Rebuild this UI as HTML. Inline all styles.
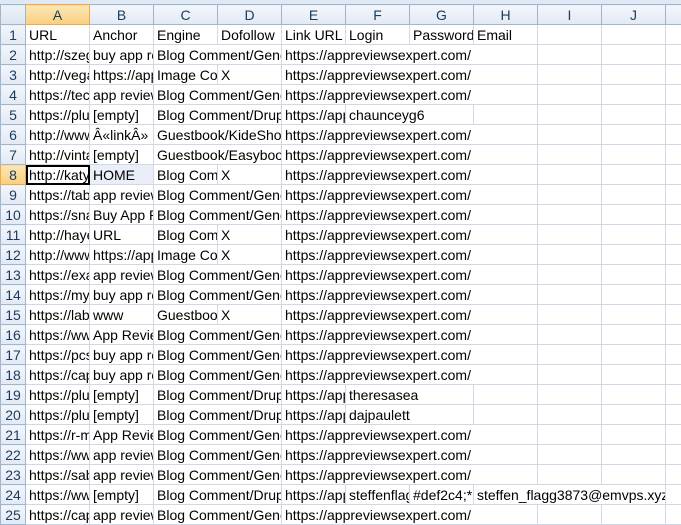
<!DOCTYPE html>
<html><head><meta charset="utf-8"><style>
html,body{margin:0;padding:0;background:#fff;width:681px;height:525px;overflow:hidden}
.top{position:absolute;left:0;top:0;width:681px;height:4px;background:#dfe8f5;border-bottom:1px solid #b8c9e0}
table{position:absolute;left:0;top:4px;border-collapse:collapse;table-layout:fixed;width:681px;font-family:"Liberation Sans",sans-serif;font-size:14px;color:#000}
td,th{border:1px solid #d0d7e5;overflow:hidden;white-space:nowrap;padding:1px 1px 0 3px;height:18px;line-height:18px;text-align:left;font-weight:normal}
th{background:linear-gradient(#f3f6fb,#e2e9f4);border-color:#9eb6ce;color:#1c3a5e;text-align:center;padding:1px 0 0 0;font-size:14px}
th.s{background:linear-gradient(#fbe7b5,#f8cf7f);border-color:#f2a74a}
td.sel{outline:2px solid #000;outline-offset:-2px}
td.hb{background:#e9eef8}
</style></head><body>
<div class="top"></div>
<table>
<colgroup><col style="width:25px"><col style="width:64px"><col style="width:64px"><col style="width:64px"><col style="width:64px"><col style="width:64px"><col style="width:64px"><col style="width:64px"><col style="width:64px"><col style="width:64px"><col style="width:64px"><col style="width:16px"></colgroup>
<thead><tr><th style="background:linear-gradient(#eef2f8,#dbe4f0)"></th><th class="s">A</th><th>B</th><th>C</th><th>D</th><th>E</th><th>F</th><th>G</th><th>H</th><th>I</th><th>J</th><th></th></tr></thead>
<tbody>
<tr><th>1</th><td>URL</td><td>Anchor</td><td>Engine</td><td>Dofollow</td><td>Link URL</td><td>Login</td><td>Password</td><td>Email</td><td></td><td></td><td></td></tr>
<tr><th>2</th><td>http://szeged</td><td>buy app reviews</td><td colspan="2">Blog Comment/Generic</td><td colspan="4">https://appreviewsexpert.com/</td><td></td><td></td><td></td></tr>
<tr><th>3</th><td>http://vegas</td><td>https://appreviews</td><td>Image Comment</td><td>X</td><td colspan="4">https://appreviewsexpert.com/</td><td></td><td></td><td></td></tr>
<tr><th>4</th><td>https://tech</td><td>app reviews</td><td colspan="2">Blog Comment/Generic</td><td colspan="4">https://appreviewsexpert.com/</td><td></td><td></td><td></td></tr>
<tr><th>5</th><td>https://plus</td><td>[empty]</td><td colspan="2">Blog Comment/Drupal</td><td>https://appreviews</td><td colspan="2">chaunceyg6</td><td></td><td></td><td></td><td></td></tr>
<tr><th>6</th><td>http://www</td><td>Â«linkÂ»</td><td colspan="2">Guestbook/KideShop</td><td colspan="4">https://appreviewsexpert.com/</td><td></td><td></td><td></td></tr>
<tr><th>7</th><td>http://vintage</td><td>[empty]</td><td colspan="2">Guestbook/Easybook</td><td colspan="4">https://appreviewsexpert.com/</td><td></td><td></td><td></td></tr>
<tr><th class="s">8</th><td class="sel">http://katy</td><td class="hb">HOME</td><td>Blog Comment</td><td>X</td><td colspan="4">https://appreviewsexpert.com/</td><td></td><td></td><td></td></tr>
<tr><th>9</th><td>https://tab</td><td>app reviews</td><td colspan="2">Blog Comment/Generic</td><td colspan="4">https://appreviewsexpert.com/</td><td></td><td></td><td></td></tr>
<tr><th>10</th><td>https://sna</td><td>Buy App Reviews</td><td colspan="2">Blog Comment/Generic</td><td colspan="4">https://appreviewsexpert.com/</td><td></td><td></td><td></td></tr>
<tr><th>11</th><td>http://hayes</td><td>URL</td><td>Blog Comment</td><td>X</td><td colspan="4">https://appreviewsexpert.com/</td><td></td><td></td><td></td></tr>
<tr><th>12</th><td>http://www</td><td>https://appreviews</td><td>Image Comment</td><td>X</td><td colspan="4">https://appreviewsexpert.com/</td><td></td><td></td><td></td></tr>
<tr><th>13</th><td>https://exa</td><td>app reviews</td><td colspan="2">Blog Comment/Generic</td><td colspan="4">https://appreviewsexpert.com/</td><td></td><td></td><td></td></tr>
<tr><th>14</th><td>https://my</td><td>buy app reviews</td><td colspan="2">Blog Comment/Generic</td><td colspan="4">https://appreviewsexpert.com/</td><td></td><td></td><td></td></tr>
<tr><th>15</th><td>https://lab</td><td>www</td><td>Guestbook</td><td>X</td><td colspan="4">https://appreviewsexpert.com/</td><td></td><td></td><td></td></tr>
<tr><th>16</th><td>https://ww</td><td>App Reviews</td><td colspan="2">Blog Comment/Generic</td><td colspan="4">https://appreviewsexpert.com/</td><td></td><td></td><td></td></tr>
<tr><th>17</th><td>https://pcs</td><td>buy app reviews</td><td colspan="2">Blog Comment/Generic</td><td colspan="4">https://appreviewsexpert.com/</td><td></td><td></td><td></td></tr>
<tr><th>18</th><td>https://cap</td><td>buy app reviews</td><td colspan="2">Blog Comment/Generic</td><td colspan="4">https://appreviewsexpert.com/</td><td></td><td></td><td></td></tr>
<tr><th>19</th><td>https://plus</td><td>[empty]</td><td colspan="2">Blog Comment/Drupal</td><td>https://appreviews</td><td colspan="2">theresasea</td><td></td><td></td><td></td><td></td></tr>
<tr><th>20</th><td>https://plus</td><td>[empty]</td><td colspan="2">Blog Comment/Drupal</td><td>https://appreviews</td><td colspan="2">dajpaulett</td><td></td><td></td><td></td><td></td></tr>
<tr><th>21</th><td>https://r-m</td><td>App Reviews</td><td colspan="2">Blog Comment/Generic</td><td colspan="4">https://appreviewsexpert.com/</td><td></td><td></td><td></td></tr>
<tr><th>22</th><td>https://ww</td><td>app reviews</td><td colspan="2">Blog Comment/Generic</td><td colspan="4">https://appreviewsexpert.com/</td><td></td><td></td><td></td></tr>
<tr><th>23</th><td>https://sab</td><td>app reviews</td><td colspan="2">Blog Comment/Generic</td><td colspan="4">https://appreviewsexpert.com/</td><td></td><td></td><td></td></tr>
<tr><th>24</th><td>https://ww</td><td>[empty]</td><td colspan="2">Blog Comment/Drupal</td><td>https://appreviews</td><td>steffenflagg</td><td>#def2c4;*,</td><td colspan="3">steffen_flagg3873@emvps.xyz</td><td></td></tr>
<tr><th>25</th><td>https://cap</td><td>app reviews</td><td colspan="2">Blog Comment/Generic</td><td colspan="4">https://appreviewsexpert.com/</td><td></td><td></td><td></td></tr>
</tbody></table>
</body></html>
